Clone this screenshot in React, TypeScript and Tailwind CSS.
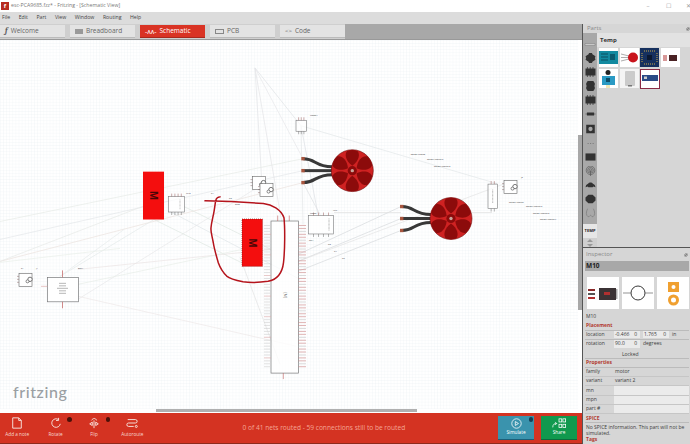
const font = { fontFamily: '"Open Sans", "Noto Sans", sans-serif' };

const menus = ["File", "Edit", "Part", "View", "Window", "Routing", "Help"];

// rats nest, in page coordinates
const wires: [number, number, number, number, string][] = [
  [255, 68, 301, 126, "#e0e2e5"], [255, 68, 262, 185, "#e2e3e6"], [255, 68, 303, 159, "#e6e7e9"],
  [301, 126, 497, 184, "#e2e6e8"], [301, 126, 303, 225, "#e4e6e8"], [301, 126, 318, 215, "#dde0e3"],
  [0, 222, 303, 159, "#e6ebe7"], [0, 240, 303, 171, "#e4e7ea"], [0, 262, 303, 183, "#ebe2de"],
  [0, 262, 150, 204, "#e6e9e6"], [60, 277, 154, 220, "#e4eaea"], [78, 300, 262, 185, "#e8e8ea"],
  [78, 270, 271, 250, "#ebe4e4"], [184, 207, 271, 250, "#dee7e1"], [154, 220, 245, 265, "#dee7e1"],
  [170, 212, 300, 280, "#e0e5e8"], [78, 297, 296, 347, "#eee8e8"], [240, 258, 280, 365, "#e2e2e2"],
  [0, 263, 120, 249, "#e9efe9"], [298, 255, 401, 207, "#d6dadc"], [298, 262, 401, 219, "#d6dadc"],
  [298, 272, 401, 231, "#d6dadc"], [334, 213, 401, 213, "#e0e0e0"], [472, 213, 492, 213, "#e0e0e0"],
  [298, 262, 510, 182, "#e4e4e4"], [255, 68, 282, 224, "#e4e4e6"], [303, 183, 320, 215, "#dcdfe2"],
  [78, 285, 242, 250, "#e8ede8"], [60, 277, 124, 230, "#e6ebeb"],
];

const labels: [number, number, string][] = [
  [310, 116, "Motor1"], [410.7, 155, "Solder Mount"], [427, 160, "Solder Mount 2"], [434, 167, "Solder Mount 3"],
  [509, 203, "Solder Mount"], [526, 207, "Solder Mount 2"], [533, 214, "Solder Mount 3"], [540, 221, "Solder Mount 7"],
  [186, 194, "M10"], [211, 194, "R1"], [229, 199, "R2"], [235, 205, "GND"], [78, 270, "ESC1"],
  [333, 211, "VCC"], [310, 214, "Motor"], [309, 242, "SDA"], [328, 246, "R3"], [334, 253, "R4"], [342, 260, "R5"],
  [21, 270, "S1"], [36, 270, "J1"], [521, 178, "J2"],
];

const MotorSvg = ({ x, y }: { x: number; y: number }) => (
  <g>
    {[-12, 0, 12].map((dy) => (
      <g key={dy}>
        <path
          d={`M${x - 49} ${y + dy} C${x - 36} ${y + dy}, ${x - 38} ${y + dy / 3}, ${x - 20} ${y + dy / 3}`}
          fill="none"
          stroke="#383838"
          strokeWidth="3"
        />
        <rect x={x - 51} y={y + dy - 1.7} width="3.4" height="3.4" fill="#a8563f" />
      </g>
    ))}
    <circle cx={x} cy={y} r="21" fill="#cf2222" stroke="#6a0808" strokeWidth="0.6" />
    {[0, 60, 120, 180, 240, 300].map((a) => (
      <path
        key={a}
        d={`M${x} ${y - 5} C${x - 7} ${y - 10}, ${x - 8} ${y - 17}, ${x - 5} ${y - 20} C${x - 2} ${y - 21}, ${x + 2} ${y - 21}, ${x + 5} ${y - 20} C${x + 8} ${y - 17}, ${x + 7} ${y - 10}, ${x} ${y - 5} Z`}
        transform={`rotate(${a} ${x} ${y})`}
        fill="#8c0b0b"
      />
    ))}
    <circle cx={x} cy={y} r="4.6" fill="#8c0b0b" />
    <circle cx={x} cy={y} r="1.7" fill="#c9a49a" />
  </g>
);

const Box = ({ x, y, w, h, pins = 3 }: { x: number; y: number; w: number; h: number; pins?: number }) => (
  <g>
    <rect x={x} y={y} width={w} height={h} fill="#fff" fillOpacity="0.7" stroke="#77787a" strokeWidth="0.6" />
    {Array.from({ length: pins }, (_, i) => {
      const px = x + ((i + 1) * w) / (pins + 1);
      return (
        <g key={i}>
          <line x1={px} y1={y - 3} x2={px} y2={y} stroke="#9a5a58" strokeWidth="0.5" />
          <line x1={px} y1={y + h} x2={px} y2={y + h + 3} stroke="#6a6a6a" strokeWidth="0.5" />
        </g>
      );
    })}
  </g>
);

const ServoSvg = ({ x, y }: { x: number; y: number }) => (
  <g>
    <rect x={x} y={y} width="13" height="13" fill="#fff" stroke="#666" strokeWidth="0.6" />
    <circle cx={x + 11} cy={y + 6} r="2.2" fill="#fff" stroke="#555" strokeWidth="0.8" />
    <circle cx={x + 8.5} cy={y + 8} r="1.5" fill="#fff" stroke="#555" strokeWidth="0.7" />
    {[3, 6, 9].map((d) => (
      <line key={d} x1={x - 2} y1={y + d} x2={x} y2={y + d} stroke="#8a6a6a" strokeWidth="0.5" />
    ))}
  </g>
);

const Schematic = () => (
  <svg className="absolute inset-0 h-full w-full" viewBox="0 40 578 370" preserveAspectRatio="none">
    <defs>
      <pattern id="fine" x="0" y="40" width="3.1" height="3.1" patternUnits="userSpaceOnUse">
        <path d="M3.1 0H0V3.1" fill="none" stroke="#e9eef2" strokeWidth="0.45" />
      </pattern>
    </defs>
    <rect x="0" y="40" width="578" height="370" fill="#fff" />
    <rect x="0" y="40" width="578" height="370" fill="url(#fine)" />
    {wires.map(([x1, y1, x2, y2, c], i) => (
      <line key={i} x1={x1} y1={y1} x2={x2} y2={y2} stroke={c} strokeWidth="0.7" />
    ))}

    <MotorSvg x={352.3} y={171} />
    <MotorSvg x={451} y={219} />

    <rect x="143" y="172" width="21" height="48" fill="#f40e0e" />
    <text x="153.5" y="199.5" fontSize="10" fontWeight="700" fill="#4a0606" textAnchor="middle" transform="rotate(90 153.5 196)">M</text>
    <rect x="242" y="219.5" width="20.5" height="47.5" fill="#f40e0e" stroke="#7a1010" strokeWidth="0.6" strokeDasharray="1 1" />
    <text x="252" y="247" fontSize="10" fontWeight="700" fill="#4a0606" textAnchor="middle" transform="rotate(90 252 243.5)">M</text>

    <Box x={168.5} y={197} w={16} h={15.5} pins={4} />
    <Box x={308.5} y={216} w={25} h={18.5} pins={4} />
    <Box x={296} y={120.5} w={10.5} h={11} pins={3} />
    <Box x={488} y={184.5} w={9.5} h={24.5} pins={2} />
    <line x1="329" y1="219" x2="329" y2="231" stroke="#aaa" strokeWidth="1" strokeDasharray="0.8 0.6" />
    <line x1="180" y1="200" x2="180" y2="210" stroke="#aaa" strokeWidth="0.8" strokeDasharray="0.8 0.6" />
    <line x1="492.7" y1="190" x2="492.7" y2="204" stroke="#aaa" strokeWidth="1" strokeDasharray="0.8 0.6" />

    <rect x="47.5" y="278" width="31" height="24.5" fill="#fff" stroke="#77787a" strokeWidth="0.7" />
    <line x1="41" y1="287" x2="47.5" y2="287" stroke="#d9a0a0" strokeWidth="0.6" />
    <line x1="62.5" y1="271" x2="62.5" y2="278" stroke="#c05a5a" strokeWidth="0.7" />
    <line x1="62.5" y1="302.5" x2="62.5" y2="309" stroke="#c05a5a" strokeWidth="0.7" />
    {[284, 286.5, 289, 291.5, 294].map((y, i) => (
      <line key={y} x1={i === 2 ? 57 : 59} y1={y} x2={i === 2 ? 68 : 66} y2={y} stroke="#a5a5a5" strokeWidth="0.8" />
    ))}

    <ServoSvg x={19} y={274} />
    <ServoSvg x={504} y={181} />
    <ServoSvg x={252.5} y={177} />
    <ServoSvg x={260} y={184} />

    {/* big board with its pin rows */}
    <rect x="271" y="221.5" width="27.5" height="152.5" fill="#fff" fillOpacity="0.75" stroke="#77787a" strokeWidth="0.7" />
    <path d="M277.7 216v5.5M289.3 216v5.5M283.3 374v6" stroke="#c05a5a" strokeWidth="0.6" />
    {Array.from({ length: 49 }, (_, i) => (
      <g key={i}>
        <line x1="264" y1={226 + i * 2.95} x2="271" y2={226 + i * 2.95} stroke={i % 7 === 3 ? "#dba8a8" : "#cfcfcf"} strokeWidth="0.6" />
        <line x1="298.5" y1={226 + i * 2.95} x2="306" y2={226 + i * 2.95} stroke={i % 3 === 2 ? "#c4c4c4" : "#cc8484"} strokeWidth="0.6" />
      </g>
    ))}
    <text x="285" y="297" fontSize="3.6" fill="#666" textAnchor="middle" transform="rotate(90 285 296)">[M]</text>

    {labels.map(([x, y, t]) => (
      <text key={t + x} x={x} y={y} fontSize="2.3" fill="#333">{t}</text>
    ))}

    {/* hand drawn marker around the second motor */}
    <path
      d="M205 201.3 C215 201.5 250 203 263.3 204 C272 205 281 210 284 218.3 C285 228 285 250 283.5 263.3 C282.5 272 279 280 268 282 C258 283.5 250 283.5 243 282.5 C236 281 230 279.5 226.7 276.7 C222 272 220 268 218.3 263.3 C215 252 214 248 213.3 243.3 C212 236 210.5 232 211 228.3 C211.5 222 213 218 214 212 C215 206 215.5 201 216 200 C216.5 198.5 218 197.5 220 197.3"
      fill="none"
      stroke="#b5141c"
      strokeWidth="1.5"
      strokeLinecap="round"
    />
  </svg>
);

const Tab = ({ label, active, icon }: { label: string; active?: boolean; icon: React.ReactNode }) => (
  <div
    className={`flex h-[13px] w-[65px] items-center gap-[3px] pl-[5px] text-[6.5px] ${
      active ? "border-b border-[#a8281c] bg-[#d93324] text-white" : "border-b border-[#bbb] bg-[#e3e3e3] text-[#666]"
    }`}
  >
    {icon}
    <span>{label}</span>
  </div>
);

const ToolButton = ({ label, menu, children }: { label: string; menu?: boolean; children: React.ReactNode }) => (
  <div className="relative flex w-[38.4px] flex-col items-center text-[4.7px] text-[#f7d9d2]">
    <svg viewBox="0 0 16 14" className="mb-[2px] h-[12px] w-[14px]" fill="none" stroke="#f6e4df" strokeWidth="1.1">
      {children}
    </svg>
    <span>{label}</span>
    {menu && <span className="absolute right-[3px] top-[0px] h-[4.5px] w-[4.5px] rounded-full bg-[#4a1008]" />}
  </div>
);

const railIcons: React.ReactNode[] = [
  <path key="gear" d="M5 0h4l1 2 2 1 2 2-1 2 1 2-2 2-2 1-1 2H5l-1-2-2-1-2-2 1-2-1-2 2-2 2-1z" />,
  <path key="chip" d="M0 2h14v10H0zM2 0h1v2H2zM6 0h1v2H6zM10 0h1v2h-1zM2 12h1v2H2zM6 12h1v2H6zM10 12h1v2h-1z" />,
  <path key="round" d="M3 0h8l2 3v3l-1 1 1 1v3l-2 3H3l-2-3V8l1-1-1-1V3z" />,
  <path key="chip2" d="M0 2h14v10H0zM2 0h1v2H2zM6 0h1v2H6zM10 0h1v2h-1zM2 12h1v2H2zM6 12h1v2H6zM10 12h1v2h-1z" />,
  <path key="res" d="M0 6.5h2V5h10v1.5h2v1h-2V9H2V7.5H0z" />,
  <path key="sq" fillRule="evenodd" d="M1 1h12v12H1zM7 4a3 3 0 1 0 0 6 3 3 0 0 0 0-6z" />,
  <path key="dots" d="M3 7h1.4v1H3zM6.5 7h1.4v1H6.5zM10 7h1.4v1H10z" fill="#666" />,
  <path key="bar" d="M0 2h14v10H0z" />,
  <g key="ant" fill="none" stroke="#555" strokeWidth="0.9"><circle cx="7" cy="6" r="6" /><circle cx="7" cy="6" r="4" /><circle cx="7" cy="6" r="2" /><path d="M7 6v8" /></g>,
  <path key="crab" d="M4 5c1-2 5-2 6 0l3 2 1 3-3-1-1 1H4L3 9l-3 1 1-3z" />,
  <path key="hex" d="M4 1h6l4 4v4l-4 4H4L0 9V5z" />,
  <path key="curves" d="M3 1C0 6 1 13 5 12c1 0 1-2 2-2s1 2 2 2c4 1 5-6 2-11" fill="none" stroke="#777" strokeWidth="0.9" />,
];

const PanelHeaderMark = () => (
  <svg viewBox="0 0 6 6" className="h-[4px] w-[4px]" fill="none" stroke="#666" strokeWidth="0.9">
    <circle cx="3" cy="3" r="2" />
    <path d="M1 5l4-4" />
  </svg>
);

const Field = ({ v }: { v: string }) => (
  <span className="mr-[3px] flex h-[7.5px] w-[26px] items-center justify-between bg-[#eaeaea] pl-[1px] pr-[3px]">
    <span>{v}</span>
    <span>0</span>
  </span>
);

const propRows = ["family", "variant", "mn", "mpn", "part #"];
const propValues = ["motor", "variant 2", "", "", ""];

const Inspector = () => (
  <div className="flex flex-1 flex-col bg-[#d6d6d6] px-[2px] text-[5px] text-[#3c3c3c]">
    <div className="flex h-[13px] items-center justify-between pr-[1px] text-[6px] text-[#888]">
      <span className="pl-[1px]">Inspector</span>
      <PanelHeaderMark />
    </div>
    <div className="flex h-[9.5px] items-center bg-[#a8a8a8] pl-[1px] text-[6.5px] font-bold text-[#222]">M10</div>
    <div className="ml-[2px] mt-[6px] flex gap-[3px]">
      <div className="h-[32px] w-[32px] bg-white">
        <svg viewBox="0 0 32 32" className="h-full w-full">
          <rect x="1" y="12" width="7" height="2" fill="#8b2a2a" />
          <rect x="1" y="16" width="7" height="2" fill="#555" />
          <rect x="1" y="20" width="7" height="2" fill="#b03030" />
          <rect x="12" y="11" width="17" height="12" fill="#3b3335" />
          <rect x="17" y="15" width="6" height="3" fill="#b03030" />
          <rect x="29" y="12" width="1.5" height="10" fill="#aaa" />
        </svg>
      </div>
      <div className="h-[32px] w-[32px] bg-white">
        <svg viewBox="0 0 32 32" className="h-full w-full">
          <circle cx="16" cy="16" r="7" fill="#fff" stroke="#222" strokeWidth="0.9" />
          <path d="M1 16h8M23 16h8" stroke="#666" strokeWidth="0.7" />
        </svg>
      </div>
      <div className="h-[32px] w-[32px] bg-white">
        <svg viewBox="0 0 32 32" className="h-full w-full">
          <rect x="11" y="5" width="11" height="10" fill="#f0a030" />
          <circle cx="16.5" cy="10" r="2" fill="#fff" />
          <circle cx="16.5" cy="23" r="4" fill="#fff" stroke="#f0a030" strokeWidth="3" />
        </svg>
      </div>
    </div>
    <div className="mt-[4px] h-[9px] pl-[1px]">M10</div>
    <div className="h-[9px] border-b border-[#bbb] pl-[1px] font-bold text-[#b23a30]">Placement</div>
    <div className="flex h-[9px] items-center border-b border-[#bbb]">
      <span className="w-[29px] pl-[1px]">location</span>
      <Field v="-0.466" />
      <Field v="1.765" />
      <span>in</span>
    </div>
    <div className="flex h-[9px] items-center">
      <span className="w-[29px] pl-[1px]">rotation</span>
      <Field v="90.0" />
      <span>degrees</span>
    </div>
    <div className="h-[10px] border-b border-[#bbb] pl-[37px] leading-[10px]">Locked</div>
    <div className="h-[9.3px] border-b border-[#bbb] pl-[1px] font-bold text-[#b23a30]">Properties</div>
    {propRows.map((r, i) => (
      <div key={r} className="flex h-[9.3px] items-center border-b border-[#c6c6c6]">
        <span className="w-[29px] pl-[1px]">{r}</span>
        <span className={`h-full flex-1 pl-[1px] ${propValues[i] ? "" : "bg-[#ebebeb]"}`}>{propValues[i]}</span>
      </div>
    ))}
    <div className="mt-[1px] h-[8px] border-b border-[#bbb] pl-[1px] font-bold text-[#b23a30]">SPICE</div>
    <div className="pl-[1px] pt-[1px] leading-[6px]">No SPICE information. This part will not be simulated.</div>
    <div className="pl-[1px] font-bold text-[#b23a30]">Tags</div>
  </div>
);

const Parts = () => (
  <div className="flex h-[223px] flex-col bg-[#d6d6d6]">
    <div className="flex h-[9px] items-center justify-between pl-[4px] pr-[1px] text-[6px] text-[#888]">
      <span>Parts</span>
      <PanelHeaderMark />
    </div>
    <div className="flex min-h-0 flex-1">
      <div className="flex w-[14px] flex-col items-center">
        <div className="flex w-full flex-col items-center gap-[4.1px] bg-[#a8a8a8]">
          <div className="h-[16px] w-full pt-[9px]">
            <svg viewBox="0 0 14 6" className="mx-auto h-[5px] w-[12px]" fill="#d8d8d8" stroke="#777" strokeWidth="0.6">
              <path d="M1 2h12v2H1z" />
            </svg>
          </div>
          {railIcons.map((icon, i) => (
            <svg key={i} viewBox="0 0 14 14" className="h-[10px] w-[11px]" fill="#323232">
              {icon}
            </svg>
          ))}
          <div className="h-[2px]" />
        </div>
        <div className="flex h-[15px] w-full items-center justify-center bg-[#e6e6e6] text-[4px] font-bold text-[#222]">TEMP</div>
        <div className="flex w-full flex-1 flex-col items-center gap-[2px] bg-[#cfcfcf] pt-[1px]">
          <span className="border-x-[3px] border-b-[3px] border-x-transparent border-b-[#999]" />
          <span className="border-x-[3px] border-t-[3px] border-x-transparent border-t-[#999]" />
        </div>
      </div>
      <div className="flex-1">
        <div className="flex h-[14px] items-center bg-[#e2e2e2] pl-[3px] text-[6px] font-bold text-[#333]">Temp</div>
        <div className="grid grid-cols-[repeat(4,19px)] gap-[1.5px] pl-[2px] pt-[1px]">
          <svg viewBox="0 0 19 19" className="h-[19px] w-[19px] bg-white">
            <rect x="0" y="3" width="19" height="13" fill="#138aa0" />
            <path d="M2 6h7M2 9h7M2 12h7" stroke="#0c4f60" strokeWidth="1" />
            <rect x="11" y="6" width="5" height="6" fill="#0c5a6e" />
          </svg>
          <svg viewBox="0 0 19 19" className="h-[19px] w-[19px] bg-white">
            <path d="M1 6l8 2M1 9.5h8M1 13l8-2" stroke="#999" strokeWidth="0.8" />
            <circle cx="13" cy="9.5" r="5" fill="#c9141c" />
          </svg>
          <svg viewBox="0 0 19 19" className="h-[19px] w-[19px]">
            <rect width="19" height="19" fill="#16305e" />
            <path d="M4 3h11M4 16h11M2 5v9M17 5v9" stroke="#c9a94a" strokeWidth="1" strokeDasharray="1 1" />
            <rect x="7" y="7" width="5" height="5" fill="#0b1830" />
          </svg>
          <svg viewBox="0 0 19 19" className="h-[19px] w-[19px] bg-white">
            <rect x="8" y="7" width="8" height="6" fill="#4a2224" />
            <path d="M2 8h4M2 10h4M2 12h4" stroke="#b03030" strokeWidth="1" />
          </svg>
          <svg viewBox="0 0 19 19" className="h-[19px] w-[19px] bg-white">
            <circle cx="9" cy="3.5" r="2.5" fill="#222" />
            <rect x="3" y="7" width="13" height="9" fill="#2a9ac4" />
            <rect x="7" y="9" width="4" height="4" fill="#0e4f6a" />
            <path d="M8 16v3M10 16v3" stroke="#d9c34a" strokeWidth="0.8" />
          </svg>
          <svg viewBox="0 0 19 19" className="h-[19px] w-[19px] bg-[#f4f4f4]">
            <rect x="5" y="2" width="10" height="15" rx="1" fill="#cbcbcb" />
            <rect x="8" y="16" width="4" height="1.5" fill="#777" />
          </svg>
          <svg viewBox="0 0 20 20" className="h-[20px] w-[20px] bg-white">
            <rect x="0.5" y="0.5" width="19" height="19" fill="none" stroke="#8a2a44" />
            <rect x="2" y="6" width="16" height="6" fill="#2a4a86" />
            <rect x="4" y="7.5" width="3" height="2.5" fill="#ccc" />
          </svg>
        </div>
      </div>
    </div>
  </div>
);

export default function App() {
  return (
    <div className="flex h-[444px] w-[690px] flex-col overflow-hidden bg-white" style={font}>
      <div className="flex h-[12px] shrink-0 items-center bg-white pl-[1px] text-[5.2px] text-[#777]">
        <span className="mr-[2px] flex h-[8px] w-[8px] items-center justify-center bg-[#b62b20] text-[6px] font-bold text-white">f</span>
        <span>esc-PCA9685.fzz* - Fritzing - [Schematic View]</span>
        <div className="ml-auto flex gap-[16px] text-[6px] text-[#999]">
          <span className="flex w-[4px] justify-center">–</span>
          <span className="flex w-[4px] justify-center">☐</span>
          <span className="flex w-[4px] justify-center">✕</span>
        </div>
      </div>
      <div className="flex h-[12px] shrink-0 items-center gap-[8.5px] bg-[#dcdcdc] pl-[2px] text-[5.2px] text-[#444]">
        {menus.map((m) => (
          <span key={m}>{m}</span>
        ))}
      </div>
      <div className="flex min-h-0 flex-1">
        <div className="flex w-[582px] shrink-0 flex-col">
          <div className="flex h-[16px] shrink-0 border-b border-[#999]">
            <div className="flex w-[345px] items-center gap-[5px] bg-[#cfcfcf]">
              <Tab label="Welcome" icon={<span className="font-serif text-[8px] font-bold italic leading-none text-[#555]">f</span>} />
              <Tab label="Breadboard" icon={<span className="h-[5px] w-[8px] bg-[#999]" />} />
              <Tab active label="Schematic" icon={<span className="text-[7px] leading-none">-ᴧᴧ-</span>} />
              <Tab label="PCB" icon={<span className="h-[5px] w-[9px] border border-[#888]" />} />
              <Tab label="Code" icon={<span className="text-[6px] leading-none">{"<>"}</span>} />
            </div>
            <div className="flex-1 bg-[#a8a8a8]" />
          </div>
          <div className="flex min-h-0 flex-1 flex-col bg-white">
            <div className="flex min-h-0 flex-1">
              <div className="relative flex-1 overflow-hidden">
                <Schematic />
                <span className="absolute left-[13px] top-[340px] text-[16px] font-medium tracking-[0.6px] text-[#9a9fa3]" style={{ fontFamily: "Lato, sans-serif" }}>fritzing</span>
              </div>
              <div className="w-[4px] bg-white pt-[95px]">
                <div className="h-[175px] w-[4px] bg-[#a8a8a8]" />
              </div>
            </div>
            <div className="h-[4px] shrink-0 pl-[156px]">
              <div className="h-[3px] w-[261px] bg-[#b0b0b0]" />
            </div>
          </div>
          <div className="flex h-[31px] shrink-0 items-center border-b border-[#8d2a1c] bg-[#d43322]">
            <div className="-ml-[2px] flex">
              <ToolButton label="Add a note"><path d="M3 1h7l3 3v9H3zM10 1v3h3" /></ToolButton>
              <ToolButton label="Rotate" menu><path d="M13 8a5 5 0 1 1-2-5M11 1v3H8" /></ToolButton>
              <ToolButton label="Flip" menu><path d="M3 8l3 2V6zM13 8l-3 2V6zM8 4v9M5 4c2-3 5-3 6 0" /></ToolButton>
              <ToolButton label="Autoroute"><path d="M3 3h9a2 2 0 0 1 0 4H4a2 2 0 0 0 0 4h6" /><circle cx="13" cy="11" r="1.2" /></ToolButton>
            </div>
            <div className="flex-1 pl-[91px] text-[6.6px] text-[#f4a594]">0 of 41 nets routed - 59 connections still to be routed</div>
            <div className="relative mr-[7px] flex h-[24px] w-[36px] flex-col items-center justify-center border-b border-[#1d5f78] bg-[#3a93ad] text-[4.7px] text-white">
              <svg viewBox="0 0 14 14" className="h-[11px] w-[11px]" fill="none" stroke="white" strokeWidth="1"><circle cx="7" cy="7" r="6" /><path d="M5.5 4.5l4 2.5-4 2.5z" /></svg>
              <span>Simulate</span>
              <span className="absolute right-[1px] top-[1px] h-[4.5px] w-[4.5px] rounded-full bg-[#123f55]" />
            </div>
            <div className="mr-[5px] flex h-[24px] w-[36px] flex-col items-center justify-center border-b border-[#0e6a3c] bg-[#10994e] text-[4.7px] text-white">
              <svg viewBox="0 0 18 14" className="h-[11px] w-[14px]" fill="none" stroke="white" strokeWidth="1"><path d="M1 12c0-4 2-5 5-5M4 5l2 2-2 2" /><rect x="9" y="1" width="3.5" height="4" /><rect x="14" y="1" width="3.5" height="4" /><rect x="9" y="8" width="3.5" height="4" /><rect x="14" y="8" width="3.5" height="4" /></svg>
              <span>Share</span>
            </div>
          </div>
        </div>
        <div className="flex flex-1 flex-col border-l border-[#555]">
          <Parts />
          <div className="h-[1px] bg-[#555]" />
          <Inspector />
        </div>
      </div>
    </div>
  );
}
